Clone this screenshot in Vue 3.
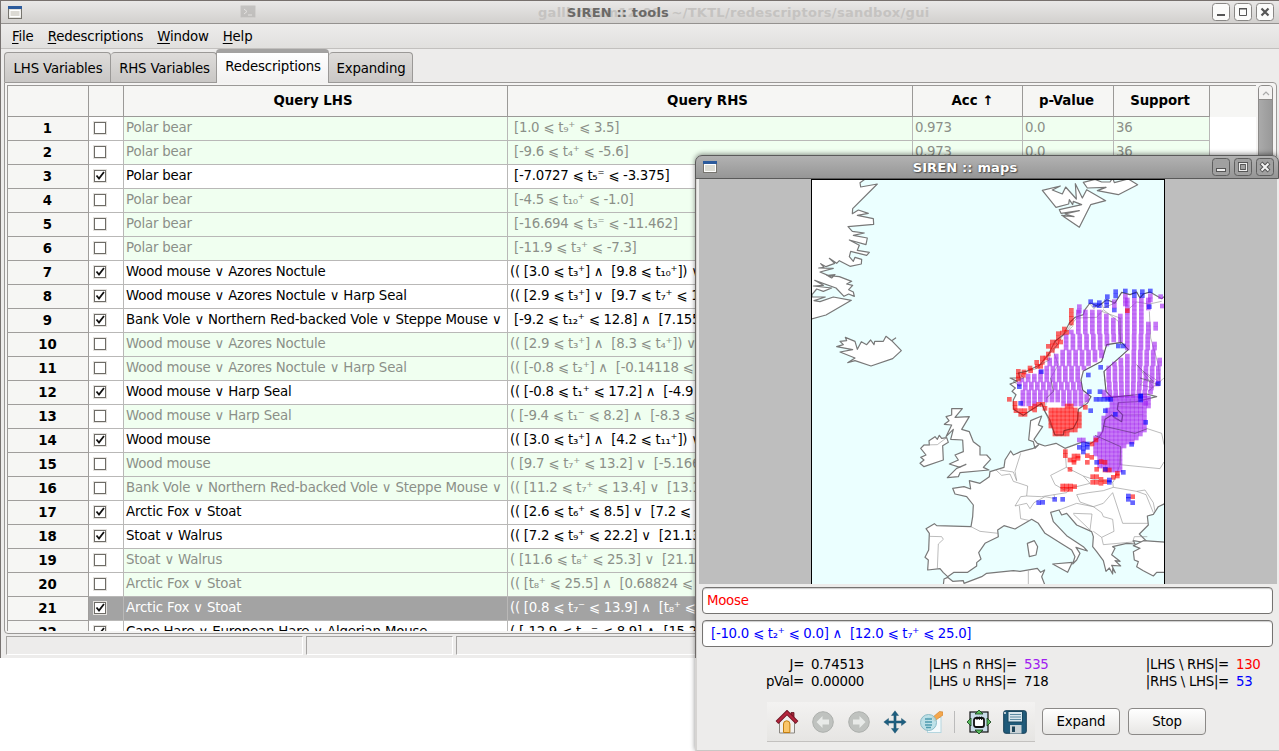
<script setup>
const columns = [
  { key: 'n', label: '' }, { key: 'c', label: '' }, { key: 'l', label: 'Query LHS' }, { key: 'r', label: 'Query RHS' },
  { key: 'a', label: 'Acc ↑' }, { key: 'p', label: 'p-Value' }, { key: 's', label: 'Support' },
]
const rows = [
  [0, 'Polar bear', ' [1.0 ⩽ t₉⁺ ⩽ 3.5]'],
  [0, 'Polar bear', ' [-9.6 ⩽ t₄⁺ ⩽ -5.6]'],
  [1, 'Polar bear', ' [-7.0727 ⩽ t₅⁼ ⩽ -3.375]'],
  [0, 'Polar bear', ' [-4.5 ⩽ t₁₀⁺ ⩽ -1.0]'],
  [0, 'Polar bear', ' [-16.694 ⩽ t₃⁼ ⩽ -11.462]'],
  [0, 'Polar bear', ' [-11.9 ⩽ t₃⁺ ⩽ -7.3]'],
  [1, 'Wood mouse ∨ Azores Noctule', '(( [3.0 ⩽ t₃⁺] ∧  [9.8 ⩽ t₁₀⁺]) ∨'],
  [1, 'Wood mouse ∨ Azores Noctule ∨ Harp Seal', '(( [2.9 ⩽ t₃⁺] ∨  [9.7 ⩽ t₇⁺ ⩽ 13'],
  [1, 'Bank Vole ∨ Northern Red-backed Vole ∨ Steppe Mouse ∨', ' [-9.2 ⩽ t₁₂⁺ ⩽ 12.8] ∧  [7.1556'],
  [0, 'Wood mouse ∨ Azores Noctule', '(( [2.9 ⩽ t₃⁺] ∧  [8.3 ⩽ t₄⁺]) ∨'],
  [0, 'Wood mouse ∨ Azores Noctule ∨ Harp Seal', '(( [-0.8 ⩽ t₂⁺] ∧  [-0.14118 ⩽'],
  [1, 'Wood mouse ∨ Harp Seal', '(( [-0.8 ⩽ t₁⁺ ⩽ 17.2] ∧  [-4.9'],
  [0, 'Wood mouse ∨ Harp Seal', '( [-9.4 ⩽ t₁⁻ ⩽ 8.2] ∧  [-8.3 ⩽'],
  [1, 'Wood mouse', '(( [3.0 ⩽ t₃⁺] ∧  [4.2 ⩽ t₁₁⁺]) ∨'],
  [0, 'Wood mouse', '( [9.7 ⩽ t₇⁺ ⩽ 13.2] ∨  [-5.166'],
  [0, 'Bank Vole ∨ Northern Red-backed Vole ∨ Steppe Mouse ∨', '(( [11.2 ⩽ t₇⁺ ⩽ 13.4] ∨  [13.1'],
  [1, 'Arctic Fox ∨ Stoat', '(( [2.6 ⩽ t₆⁺ ⩽ 8.5] ∨  [7.2 ⩽'],
  [1, 'Stoat ∨ Walrus', '(( [7.2 ⩽ t₉⁺ ⩽ 22.2] ∨  [21.13'],
  [0, 'Stoat ∨ Walrus', '( [11.6 ⩽ t₈⁺ ⩽ 25.3] ∨  [21.1'],
  [0, 'Arctic Fox ∨ Stoat', '(( [t₈⁺ ⩽ 25.5] ∧  [0.68824 ⩽'],
  [1, 'Arctic Fox ∨ Stoat', '(( [0.8 ⩽ t₇⁻ ⩽ 13.9] ∧  [t₈⁺ ⩽'],
  [1, 'Cape Hare ∨ European Hare ∨ Algerian Mouse', '( [-12.9 ⩽ t₁₀⁻ ⩽ 8.9] ∧  [15.2'],
]
const rhsQuery = ' [-10.0 ⩽ t₂⁺ ⩽ 0.0] ∧  [12.0 ⩽ t₇⁺ ⩽ 25.0]'

/* map cells */
const inside = (x, y, poly) => {
  let hit = false
  for (let i = 0, j = poly.length - 1; i < poly.length; j = i++) {
    const [xi, yi] = poly[i], [xj, yj] = poly[j]
    if (yi > y !== yj > y && x < ((xj - xi) * (y - yi)) / (yj - yi) + xi) hit = !hit
  }
  return hit
}
const pairs = (s) => s.trim().split(/\s+/).map((p) => p.split(',').map(Number))
const north = pairs('828,402 900,402 950,425 950,408 968,408 972,360 1048,358 1048,390 1040,420 1058,480 1072,520 1084,560 1092,580 1092,600 1060,645 1048,655 912,655 908,575 988,520 970,492 925,492 905,545 850,572 845,640 868,655 664,655 655,615 685,590 735,572 745,545 780,515 790,478 815,450')
const south1 = pairs('660,650 868,650 858,676 830,684 745,672 675,688 655,676')
const south2 = pairs('912,655 1048,655 1045,690 1035,730 1042,750 1000,795 965,808 962,885 940,886 888,862 884,775 905,765 910,720 925,690 925,665')
const sweden = pairs('745,694 800,684 812,672 832,690 846,715 846,752 795,772 762,770 748,745')
const pitchAt = (y) => (y < 470 ? 21 : y < 520 ? 20.4 : y < 570 ? 19.4 : y < 610 ? 18.6 : y < 640 ? 18 : 17.4)
const cells = []
for (let y = 366; y < 692; y += 12) {
  const p = pitchAt(y)
  for (let k = -22; k < 8; k++) {
    const x = 982 + k * p
    if (x < 1096 && (inside(x, y, north) || inside(x, y, south1))) cells.push([x, y, 'p'])
  }
}
for (let y = 660; y < 892; y += 12) {
  for (let x = 655; x < 1060; x += 12.2) {
    if (inside(x, y, sweden)) cells.push([x, y, 'r'])
    else if (inside(x, y, south2)) cells.push([x, y, 'p'])
  }
}
const add = (s, c, dx = 0, dy = 0) => pairs(s).forEach(([x, y]) => cells.push([x + dx, y + dy, c]))
add('814,397 814,410 814,422 814,435 793,453 800,463 787,465 775,467 775,480 782,492 770,492 757,492 757,504 770,504 745,505 757,517 745,528 738,540 727,540 727,553 710,553 712,565 722,565 690,570 692,578 672,582 655,580 655,592 670,592 655,603', 'r')
add('58,28 75,40 75,52 78,62 92,62 105,62 92,73 105,73 122,55 134,48 134,60 146,43 158,43 165,55 226,185 226,197 240,210 252,198 264,198 252,210 264,205 252,217 292,197 305,202 292,217 240,238 318,150 306,162 286,52 333,215 345,217 345,240 358,240 320,238 308,260 320,260 308,277 320,277 333,268 345,275 370,262 382,250 382,258 333,280 218,288 230,288 242,288 254,290 218,298 230,298 242,298 428,320', 'r', 570, 636)
add('298,5 330,5 318,28 330,28 342,28 354,28 362,28 302,62 346,62 376,73 452,18 452,30 467,97 425,163 92,40 280,162 292,162 268,172 280,175 280,186 292,172 320,217 346,238 400,247 358,270 358,277 415,318 415,328 428,338 146,338 158,337 194,328 218,328', 'b', 570, 636)
add('268,150 280,150 467,40', 'p', 570, 636)
add('302,65 315,75 328,68 328,77 352,50 350,65 350,77 377,35 377,48 406,33 433,35 433,47 457,35 457,47 481,33 373,90 478,80 385,198 400,198 332,262 295,285 154,275 88,320 505,311 452,348', 'b', 570, 306)
add('268,80 268,93 406,48 406,60 406,72 373,65 373,78 481,48 481,60 497,132 497,145 512,50 517,78', 'p', 570, 306)
add('412,92', 'r', 570, 306)
const tint = { p: '#a020f0', r: '#ff0000', b: '#0000ff' }
</script>

<template>
  <div class="desktop">
    <section class="win tools">
      <header class="title">
        <svg class="appicon" width="14" height="13" viewBox="0 0 14 13"><rect x=".5" y=".5" width="13" height="12" fill="#e4e3df" stroke="#77756f" /><rect x="0" y="0" width="14" height="3" fill="#2c5b9c" /><path d="M2 4.5h10v6H2z" fill="#dcdad4" stroke="#fff" /></svg>
        <svg class="ghosticon" width="16" height="14" viewBox="0 0 16 14"><rect x=".5" y=".5" width="15" height="12" rx="1" fill="#b0aeac" stroke="#cbc9c7" /><path d="M4 4l3 2.5L4 9M8 10h4" fill="none" stroke="#e8e6e4" /></svg>
        <span class="ghost">gallbr@vm12-09: ~/TKTL/redescriptors/sandbox/gui</span>
        <span class="caption">SIREN :: tools</span>
        <div class="wbtns">
          <svg v-for="k in 3" :key="k" width="18" height="18" viewBox="0 0 18 18">
            <rect x=".5" y=".5" width="17" height="17" rx="3" fill="#fbfbfa" stroke="#898785" />
            <path v-if="k === 1" d="M5 12h8" stroke="#555" stroke-width="2" />
            <path v-if="k === 2" d="M5.500 6h7v6.500h-7zM5 5.500h8" fill="none" stroke="#555" />
            <path v-if="k === 3" d="M5.500 5.500l7 7M12.500 5.500l-7 7" stroke="#555" stroke-width="2.200" />
          </svg>
        </div>
      </header>
      <nav class="menu"><span><u>F</u>ile</span><span><u>R</u>edescriptions</span><span><u>W</u>indow</span><span><u>H</u>elp</span></nav>
      <div class="tabs">
        <div class="tab t1">LHS Variables</div><div class="tab t2">RHS Variables</div><div class="tab t3 on">Redescriptions</div><div class="tab t4">Expanding</div>
      </div>
      <div class="pane">
        <div class="table">
          <div class="row head"><div v-for="c in columns" :key="c.key" :class="['cell', c.key]"><span>{{ c.label }}</span></div></div>
          <div v-for="(r, i) in rows" :key="i" :class="['row', { off: !r[0], sel: i === 20 }]">
            <div class="cell n">{{ i + 1 }}</div>
            <div class="cell c">
              <svg width="14" height="14" viewBox="0 0 14 14"><rect x=".5" y=".5" width="13" height="13" fill="none" stroke="#e3e1de" /><rect x="1.500" y="1.500" width="11" height="11" fill="#fff" stroke="#6e6c67" /><path v-if="r[0]" d="M3.500 6.500L6 9.500 11 3" fill="none" stroke="#111" stroke-width="1.800" /></svg>
            </div>
            <div class="cell l">{{ r[1] }}</div>
            <div class="cell r">{{ r[2] }}</div>
            <div class="cell a">0.973</div>
            <div class="cell p">0.0</div>
            <div class="cell s">36</div>
          </div>
        </div>
        <div class="scroll"><div class="up"><svg width="8" height="6" viewBox="0 0 8 6"><path d="M1 5l3-3 3 3" fill="none" stroke="#aaa" stroke-width="1.200" /></svg></div><div class="thumb"></div></div>
      </div>
      <footer class="status"><i class="s1"></i><i class="s2"></i><i class="s3"></i></footer>
    </section>

    <section class="win maps">
      <header class="title dark">
        <svg class="appicon" width="14" height="12" viewBox="0 0 14 12"><rect x=".5" y=".5" width="13" height="11" fill="#e9e8e4" stroke="#77756f" /><rect x="0" y="0" width="14" height="3" fill="#2c5b9c" /><path d="M1.500 3.500h11v7h-11z" fill="#dcdcd4" stroke="#fff" /></svg>
        <span class="caption">SIREN :: maps</span>
        <div class="wbtns">
          <svg v-for="k in 3" :key="k" width="18" height="18" viewBox="0 0 18 18">
            <rect x=".5" y=".5" width="17" height="17" rx="3" fill="#a0a0a0" stroke="#5f5f5f" />
            <rect v-if="k === 1" x="4.500" y="10.500" width="9" height="3" fill="#eee" stroke="#555" />
            <path v-if="k === 2" d="M5.500 5.500h7v7h-7z" fill="none" stroke="#555" stroke-width="3" />
            <path v-if="k === 2" d="M5.500 5.500h7v7h-7z" fill="none" stroke="#eee" stroke-width="1.200" />
            <path v-if="k === 3" d="M5 5l8 8M13 5l-8 8" stroke="#555" stroke-width="4" />
            <path v-if="k === 3" d="M5.500 5.500l7 7M12.500 5.500l-7 7" stroke="#f4f4f4" stroke-width="2" />
          </svg>
        </div>
      </header>
      <div class="canvas">
        <svg class="map" width="354" height="405" viewBox="33 3 1062 1215">
          <rect x="33" y="3" width="1062" height="1215" fill="#ebffff" />
          <g fill="#fff" stroke="#787878" stroke-width="3.600" stroke-linejoin="round">
            <path d="M30,0H200L180,14 182,27 232,18 158,92 157,107 175,96 205,106 172,112 220,122 221,139 144,146 157,160 193,165 160,172 202,180 198,200 148,186 178,202 172,217 208,223 200,232 152,220 148,236 160,250 165,238 185,244 184,258 150,265 118,248 110,256 88,241 104,256 78,266 62,257 72,268 56,270 100,271 60,282 84,292 105,290 95,300 80,292 118,296 155,310 140,318 158,322 146,335 160,342 163,355 146,348 132,355 108,330 44,307 70,322 40,324 95,330 70,340 50,333 36,350 36,357 76,357 42,368 60,371 100,357 154,367 78,411 30,424z" />
            <path d="M110,506L130,500 120,490 140,488 136,478 165,490 172,514 184,491 200,500 212,486 222,500 224,490 250,490 258,475 275,488 287,480 275,488 304,518 278,542 213,564 165,548 143,554 165,540 120,522 158,515z" />
            <path d="M727,37L781,24 757,36 787,48 797,27 829,63 826,17 847,60 860,35 917,68 872,80 838,148 785,112 822,116 795,108 838,98 783,106 778,95 845,80 820,70 818,80 808,65 806,78 768,88z" />
            <path d="M850,13L885,4 905,12 930,12 938,0 943,14 985,3 1013,20 955,50 892,38 918,28 862,30z" />
            <path d="M1100,350L1085,362 1050,342 1030,348 1020,360 1010,342 990,350 965,343 945,375 920,365 895,385 870,375 855,395 850,410 825,418 808,435 790,470 765,490 745,530 720,560 680,580 655,585 660,600 630,600 652,610 630,618 646,630 636,640 648,650 640,666 641,694 670,712 690,698 725,676 735,701 750,726 765,771 790,771 792,758 820,751 833,726 835,694 862,676 873,656 848,636 843,606 850,579 905,550 920,500 965,493 985,515 912,580 918,640 935,658 1000,651 1040,648 1070,656 1010,671 955,674 952,694 968,711 965,731 945,721 935,711 915,724 908,761 895,781 870,798 850,791 795,811 768,796 735,804 712,796 702,784 728,746 715,741 725,714 692,728 686,786 700,791 705,811 715,801 700,811 662,821 640,831 632,819 615,846 612,868 570,881 568,896 540,916 508,908 512,933 492,926 458,931 465,948 500,956 520,981 518,1016 513,1046 410,1043 403,1037 378,1052 388,1066 386,1116 375,1138 385,1146 383,1176 420,1172 430,1184 443,1196 462,1183 503,1183 530,1164 530,1154 543,1143 536,1124 555,1096 595,1076 593,1056 612,1043 645,1053 695,1024 715,1036 735,1066 780,1094 815,1116 825,1136 818,1158 830,1146 840,1126 828,1108 862,1119 850,1106 800,1073 760,1031 752,1003 777,996 785,1011 800,1006 830,1041 875,1061 880,1076 878,1106 890,1121 910,1148 918,1180 928,1170 938,1188 938,1172 946,1184 935,1162 962,1164 945,1148 960,1150 935,1130 945,1111 938,1106 980,1096 1005,1098 1000,1088 1025,1092 1040,1090 1018,1068 1045,1041 1042,1014 1060,1009 1075,986 1100,974z" />
            <path d="M1100,1093L1030,1088 1000,1103 1020,1111 1000,1121 1003,1146 1015,1151 1010,1166 1030,1178 1060,1194 1070,1183 1100,1183z" />
            <path d="M455,692L487,692 465,718 508,716 485,754 508,761 520,791 540,806 540,831 560,831 572,844 550,868 567,876 480,884 475,896 442,899 470,871 498,859 480,868 448,858 475,846 465,831 490,821 488,786 452,784 460,754 438,776 455,741 433,739 447,728 438,716 455,711z" />
            <path d="M372,801L388,801 387,788 405,776 412,784 418,772 425,781 440,779 445,793 428,803 430,846 372,866 360,856 372,846 362,838 378,831 362,811z" />
            <path d="M430,1222L432,1203 443,1198 458,1210 490,1208 492,1216 545,1196 560,1186 640,1178 660,1180 712,1171 722,1183 734,1176 725,1196 735,1222z" />
            <path d="M682,1096L703,1088 713,1106 708,1131 688,1136zM758,1158L817,1153 803,1183z" />
          </g>
          <g fill="none" stroke="#8e8e8e" stroke-width="1.800">
            <path d="M388,1075L425,1076 430,1084 415,1098 412,1172M513,1046L540,1060 595,1066M588,876L605,892 630,888 640,910 683,924 680,954 662,956 645,984 680,976 690,992 702,974 735,956 765,962 762,950M600,876L640,882 650,908M662,826L645,880 650,908M680,954L725,956 800,944 810,932M795,811L799,868 752,892 765,920 790,934 830,926 870,916 850,894 799,868M850,894L880,904 938,912 940,928 910,938 865,944 830,950M940,928L1010,940 1035,936 1060,974 1065,1000M1010,940L1038,950 1060,1004M830,950L840,972 880,986 910,976 938,944M938,944L968,1036 1045,1036M777,996L830,976 880,986 905,1004 910,1016 938,1024 942,1060 905,1078 880,1060M820,1006L876,1008 870,1056 820,1008M905,1078L910,1100 998,1092 1003,1076 1042,1076M658,984L662,1022 690,1028M685,1178V1220M885,772L962,806 960,860 1080,872 1092,852M960,860L940,912M968,711L1030,710M910,744L1005,766 1042,752 1085,766 1092,800M952,686L1030,688M440,779L412,800 372,801" />
            <path d="M735,700L740,660 760,640 752,600 775,560 760,520 790,470 830,420 890,418 910,395 955,430 962,500M905,400L960,420M978,400L1010,372 1048,378 1085,370M1048,400L1052,480 1075,560 1080,620M1010,560L1040,600 1020,620 1060,630 1030,580 1075,610 1045,640 1092,600" />
          </g>
          <rect v-for="(c, i) in cells" :key="i" :x="c[0] - 7" :y="c[1] - 7" width="14" height="14" :fill="tint[c[2]]" fill-opacity=".6" />
          <g fill="none" stroke="#333" stroke-opacity=".4" stroke-width="2.500">
            <path d="M825,418L808,435 818,445 790,470 765,490 772,500 745,530 750,545 720,560 710,572 680,580 655,585 672,600 640,610 660,625M850,579L905,550 920,500 965,493 985,515 912,580 918,640 935,658 1000,651M843,606L848,636 873,656 835,694 833,726 820,751 792,758 790,771 765,771 735,701 725,676 690,698 670,712 641,694M908,761L915,724 935,711 965,731 968,711 952,694 955,674M885,772L962,806 960,860M910,744L1005,766 1042,752M895,385L905,375 910,390 945,375 965,343 990,350 1010,342 1020,360 1030,348 1050,342M868,376L882,392 890,380M960,420L962,500M752,600L760,640 740,660M1010,560L1060,610 1020,600 1080,622" />
          </g>
          <rect x="34.500" y="4.500" width="1059" height="1230" fill="none" stroke="#000" stroke-width="3" />
        </svg>
      </div>
      <div class="field red">Moose</div>
      <div class="field blue">{{ rhsQuery }}</div>
      <div class="stats">
        <span class="k">J=</span><span>0.74513</span><span class="k">|LHS ∩ RHS|=</span><span class="purple">535</span><span class="k">|LHS \ RHS|=</span><span class="red">130</span>
        <span class="k">pVal=</span><span>0.00000</span><span class="k">|LHS ∪ RHS|=</span><span>718</span><span class="k">|RHS \ LHS|=</span><span class="blue">53</span>
      </div>
      <div class="actions">
        <div class="toolbar">
          <svg width="24" height="24" viewBox="0 0 24 24"><path d="M4.500 11L12 4l7.500 7v12h-15z" fill="#f0efed" stroke="#8b8680" /><path d="M16 2.500h3V8h-3z" fill="#a32638" stroke="#5f1420" stroke-width=".8" /><path d="M2 12.500L12 2.500l10 10" fill="none" stroke="#6e1524" stroke-width="4" /><path d="M2.500 12L12 2.700 21.500 12" fill="none" stroke="#b4253c" stroke-width="2.400" /><path d="M8.500 22.500V14a3.200 3.200 0 0 1 6.400 0v8.500z" fill="#fac66a" stroke="#c17d11" /></svg>
          <svg width="24" height="24" viewBox="0 0 24 24"><circle cx="12" cy="12" r="10.300" fill="#bfc2bf" stroke="#adb0ad" /><path d="M5.500 12l6-6v3.500H18v5h-6.500V18z" fill="#e8eae8" /></svg>
          <svg width="24" height="24" viewBox="0 0 24 24"><circle cx="12" cy="12" r="10.300" fill="#bfc2bf" stroke="#adb0ad" /><path d="M18.500 12l-6-6v3.500H6v5h6.500V18z" fill="#e8eae8" /></svg>
          <svg width="24" height="24" viewBox="0 0 24 24"><path d="M12 .8l3.600 4.700h-2.500v5.400h5.400V8.400L23.200 12l-4.700 3.600v-2.500h-5.400v5.400h2.500L12 23.200l-3.600-4.700h2.500v-5.400H5.500v2.500L.8 12l4.700-3.600v2.500h5.400V5.500H8.400z" fill="#1e5f80" stroke="#174c66" stroke-width=".4" /></svg>
          <svg width="24" height="24" viewBox="0 0 24 24"><rect x="8.500" y="7.500" width="13.500" height="15" fill="#f5fafc" stroke="#b5d6df" /><path d="M13.500 7.500L20.500 1.500 24 2v3l-8.500 6z" fill="#f4a64c" stroke="#cf8733" stroke-width=".7" /><circle cx="9.500" cy="12.500" r="8" fill="#b4dde5" fill-opacity=".85" stroke="#8abbc6" /><path d="M6 9h7M6 12h7M6 15h7M7 17.500h5" stroke="#4d9bae" stroke-width="1.300" /></svg>
          <i></i>
          <svg width="24" height="24" viewBox="0 0 24 24"><rect x="3" y="2" width="18" height="20" fill="#c9dce8" stroke="#111" stroke-width="1.200" /><rect x="7" y="8" width="10" height="9" rx="2" fill="#fff" stroke="#111" stroke-width="1.800" /><path d="M10 6.500V10M12.300 6.500V10M14.600 6.500V10" stroke="#111" /><path d="M12 0l4 4H8zM12 24l4-4H8zM0 12l4-4v8zM24 12l-4-4v8z" fill="#55b95c" stroke="#123c14" stroke-width=".8" /></svg>
          <svg width="24" height="24" viewBox="0 0 24 24"><rect x=".7" y=".7" width="22.600" height="22.600" rx="2" fill="#205b7a" stroke="#173f56" /><rect x="5" y="1.500" width="14.500" height="10.500" fill="#d8e6ed" stroke="#184861" /><path d="M7 4.500h11M7 7h11M7 9.500h11" stroke="#5d8ba3" /><rect x="7" y="15" width="11.500" height="8.500" fill="#c9d2d6" /><path d="M9 16.500h3V22H9z" fill="#1c4358" /><path d="M2 2v2" stroke="#eee" stroke-width="1.500" /></svg>
        </div>
        <button>Expand</button><button>Stop</button>
      </div>
    </section>
  </div>
</template>

<style>
body { margin: 0; background: #fff; overflow: hidden; }
</style>
<style scoped>
* { box-sizing: border-box; }
.desktop { position: relative; width: 1279px; height: 751px; overflow: hidden; background: #fff; font: 13.333px/17px "DejaVu Sans", sans-serif; letter-spacing: -.17px; color: #000; }
.win { position: absolute; background: #edeceb; display: flex; flex-direction: column; }
.tools { left: 0; top: 0; width: 1279px; height: 658px; border-left: 1px solid #777270; }
.maps { left: 695px; top: 155px; width: 584px; height: 596px; border-radius: 7px 7px 0 0; border-left: 2px solid #d6d4d2; border-bottom: 1px solid #c9c7c5; box-shadow: 0 -1px 5px rgba(0, 0, 0, .45); clip-path: inset(-8px 0 0 -6px); }
.maps::before { content: ""; position: absolute; left: -2px; top: 20px; width: 1px; height: 483px; background: #6f6b69; }
.title { position: relative; height: 24px; flex: none; border-top: 1px solid #77706d; border-bottom: 1px solid #94918f; background: linear-gradient(#e9e8e7, #d2d0ce); display: flex; justify-content: center; align-items: center; font-weight: bold; font-size: 13px; letter-spacing: .15px; color: #6b6967; }
.dark { margin-left: -2px; border: 1px solid #5a5a5a; border-radius: 7px 7px 0 0; background: linear-gradient(#b2b2b2, #969696); color: #fff; text-shadow: 0 0 2px #444, 1px 1px 1px #555; }
.appicon { position: absolute; left: 7px; top: 5px; }
.ghosticon { position: absolute; left: 239px; top: 4px; opacity: .6; }
.ghost { position: absolute; left: 537px; top: 3px; color: #c5c3c1; white-space: pre; letter-spacing: .28px; }
.caption { position: relative; left: -22px; }
.wbtns { position: absolute; right: 5px; top: 2px; display: flex; gap: 4px; }
.dark .wbtns { right: 4px; }
.menu { height: 25px; flex: none; display: flex; gap: 14px; padding: 4px 0 0 11px; border-bottom: 1px solid #c2c0be; background: linear-gradient(#edeceb, #e1e0de); }
.menu u { text-underline-offset: 2px; }
.tabs { height: 33px; flex: none; display: flex; align-items: flex-end; padding-left: 3px; }
.tab { height: 30px; border: 1px solid #9b9997; border-bottom: 0; border-radius: 4px 4px 0 0; background: linear-gradient(#dedcda, #c9c7c5); line-height: 31px; text-align: center; white-space: nowrap; }
.t1 { width: 107px; padding-left: 1px; }
.t2 { width: 106px; border-left: 0; padding-left: 2px; }
.t3 { width: 113px; margin-left: -1px; padding-left: 1px; }
.t4 { width: 84px; border-left: 0; padding-left: 1px; }
.tab.on { height: 34px; margin-bottom: -1px; position: relative; border-top: 4px solid #a3a2a1; background: linear-gradient(#fff, #f2f1f0); line-height: 27px; box-shadow: inset 0 1px #fff; }
.pane { height: 552px; flex: none; margin: 0 2px 0 3px; border: 1px solid #9b9997; border-radius: 0 4px 4px 4px; background: #f5f4f3; padding: 2px 3px 3px 2px; display: flex; justify-content: space-between; }
.table { width: 1249px; height: 546px; overflow: hidden; background: #fff; border-top: 1px solid #9b9997; }
.row { display: flex; height: 24px; }
.cell { height: 24px; border-right: 1px solid #b9b8b7; border-bottom: 1px solid #b9b8b7; padding-left: 2px; line-height: 21px; white-space: pre; overflow: hidden; flex: none; }
.off .cell { background: #f0fff0; color: #8b8f88; }
.cell.n, .off .cell.n { width: 82px; background: #f6f6f4; border-color: #a09e9c; border-left: 1px solid #9b9997; color: #000; font-weight: bold; line-height: 23px; text-align: center; padding: 0 1px 0 0; letter-spacing: 0; }
.cell.c, .off .cell.c { width: 35px; background: #fff; padding: 4px 0 0 4px; }
.cell.c svg { display: block; }
.cell.l { width: 384px; } .cell.r { width: 405px; letter-spacing: -.26px; } .cell.a { width: 110px; } .cell.p { width: 91px; } .cell.s { width: 96px; }
.cell.a, .cell.p, .cell.s { letter-spacing: -.3px; }
.sel .cell.c, .sel .cell.l, .sel .cell.r, .sel .cell.a, .sel .cell.p, .sel .cell.s { background: #a3a3a3; color: #fff; }
.head { height: 31px; background: #f6f6f4; }
.row.head .cell { height: 31px; background: #f6f6f4; border-color: #9b9997; text-align: center; font-weight: bold; line-height: 29px; padding: 0; letter-spacing: 0; }
.row.head .cell.p, .row.head .cell.s { letter-spacing: -.1px; padding-right: 3px; }
.row.head .cell.l, .row.head .cell.r { padding-right: 5px; }
.row.head .cell.a { padding-left: 10px; }
.scroll { width: 15px; border: 1px solid #8d8b89; border-radius: 4px; overflow: hidden; background: #ddd; }
.up { height: 14px; background: #f4f3f2; border-bottom: 1px solid #8d8b89; display: flex; align-items: center; justify-content: center; }
.thumb { height: 530px; background: linear-gradient(90deg, #aaa, #999); }
.status { height: 24px; display: flex; gap: 3px; padding: 2px 0 2px 5px; }
.status i { height: 19px; flex: none; border: 1px solid #a5a3a1; border-right-color: #fff; border-bottom-color: #fff; }
.s1 { width: 297px; } .s2 { width: 147px; } .s3 { width: 800px; }
.canvas { height: 405px; flex: none; margin: 0 2px; background: #bebebe; padding-left: 112px; }
.map { display: block; }
.field { height: 27px; flex: none; margin: 3px 6px 0 5px; border: 1px solid #757371; border-radius: 4px; background: #fff; padding-left: 4px; line-height: 25px; white-space: pre; box-shadow: inset 0 1px 1px #ccc; letter-spacing: -.28px; }
.field + .field { margin-top: 6px; }
.red { color: #f00; } .blue { color: #00f; } .purple { color: #a020f0; }
.stats { display: grid; grid-template-columns: 107px 53px 160px 53px 159px 46px; grid-auto-rows: 17px; margin-top: 9px; white-space: pre; letter-spacing: -.3px; }
.stats span { padding-left: 7px; }
.stats .k { text-align: right; padding: 0; }
.actions { display: flex; margin: 12px 0 0 70px; }
.toolbar { width: 268px; height: 40px; background: linear-gradient(#f3f2f1, #e6e5e3); border-bottom: 1px solid #c3c1bf; display: flex; align-items: center; padding-left: 8px; gap: 12px; }
.toolbar i { width: 1px; height: 22px; background: #bbb; margin: 0 0 0 -1px; }
button { width: 78px; height: 27px; margin: 6px 0 0 7px; padding: 0; border: 1px solid #8b8987; border-radius: 4px; background: linear-gradient(#fff, #e7e6e4); font: inherit; letter-spacing: inherit; color: #000; }
button + button { margin-left: 8px; }
</style>
